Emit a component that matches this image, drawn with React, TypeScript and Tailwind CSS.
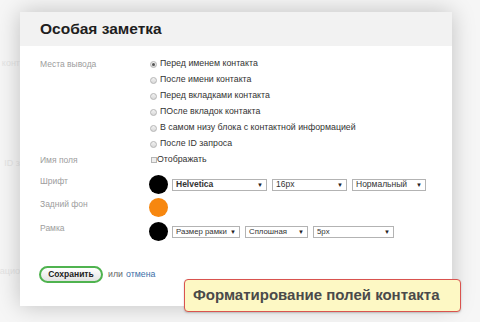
import React from "react";

const POSITIONS = [
  "Перед именем контакта",
  "После имени контакта",
  "Перед вкладками контакта",
  "ПОсле вкладок контакта",
  "В самом низу блока с контактной информацией",
  "После ID запроса",
];

function Radio({ checked }: { checked?: boolean }) {
  return (
    <span className="w-[7px] h-[7px] rounded-full border border-[#b5b5b5] bg-gradient-to-b from-[#f2f2f2] to-[#d9d9d9] flex items-center justify-center mr-[3px]">
      {checked && <span className="w-[3px] h-[3px] rounded-full bg-[#555]" />}
    </span>
  );
}

function Select({
  value,
  width,
  bold,
  small,
}: {
  value: string;
  width: string;
  bold?: boolean;
  small?: boolean;
}) {
  return (
    <div
      className={`${width} h-[12px] border border-[#b3b3b3] bg-white flex items-center justify-between pl-[3px] pr-[3px] text-[#333] leading-none whitespace-nowrap ${
        small ? "text-[7.8px]" : "text-[8.5px]"
      } ${bold ? "font-bold" : ""}`}
    >
      <span>{value}</span>
      <span className="text-[6px] text-[#222]">▼</span>
    </div>
  );
}

function Label({ children }: { children: React.ReactNode }) {
  return (
    <div className="w-[109px] shrink-0 text-[8.5px] text-[#9d9d9d] leading-[12px]">
      {children}
    </div>
  );
}

export default function App() {
  return (
    <div
      className="relative w-[480px] h-[322px] overflow-hidden bg-[#f6f6f6] flex"
      style={{ fontFamily: '"Liberation Sans", Arial, sans-serif' }}
    >
      <div className="w-[20px] shrink-0 overflow-hidden text-[9px] text-[#e4e4e4] whitespace-nowrap flex flex-col items-end">
        <div className="mt-[57px]">конт</div>
        <div className="mt-[86px]">ID з</div>
        <div className="mt-[95px]">ацио</div>
      </div>

      <div className="mt-[12px] w-[432px] h-[294px] bg-white shadow-[0_0_22px_rgba(0,0,0,0.22)] flex flex-col">
        <div className="h-[34px] bg-[#f2f2f2] flex items-center pl-[20px]">
          <h1 className="text-[15.5px] font-bold text-[#1e1e1e] leading-none">
            Особая заметка
          </h1>
        </div>

        <div className="pl-[20px] pt-[10px] flex flex-col">
          <div className="flex">
            <Label>
              <div className="mt-[2px]">Места вывода</div>
            </Label>
            <div className="flex flex-col">
              {POSITIONS.map((p, i) => (
                <div
                  key={p}
                  className="h-[16px] flex items-center text-[8.8px] text-[#333] pl-[1px] whitespace-nowrap"
                >
                  <Radio checked={i === 0} />
                  {p}
                </div>
              ))}
            </div>
          </div>

          <div className="flex h-[16px] items-center">
            <Label>Имя поля</Label>
            <div className="flex items-center text-[8.8px] text-[#333] pl-[2px]">
              <span className="w-[6px] h-[6px] border border-[#b5b5b5] bg-[#eee]" />
              Отображать
            </div>
          </div>

          <div className="flex mt-[7px]">
            <Label>Шрифт</Label>
            <div className="flex items-center gap-[5px]">
              <span className="w-[19px] h-[19px] rounded-full bg-black mr-[-1px]" />
              <Select value="Helvetica" width="w-[95px]" bold />
              <Select value="16px" width="w-[75px]" />
              <Select value="Нормальный" width="w-[74px]" />
            </div>
          </div>

          <div className="flex mt-[4px]">
            <Label>Задний фон</Label>
            <span className="w-[19px] h-[19px] rounded-full bg-[#f7870f]" />
          </div>

          <div className="flex mt-[5px]">
            <Label>Рамка</Label>
            <div className="flex items-center gap-[5px]">
              <span className="w-[19px] h-[19px] rounded-full bg-black mr-[-1px]" />
              <Select value="Размер рамки" width="w-[68px]" small />
              <Select value="Сплошная" width="w-[63px]" small />
              <Select value="5px" width="w-[81px]" small />
            </div>
          </div>

          <div className="flex items-center mt-[25px] ml-[-1px] text-[8.8px]">
            <button className="w-[64px] h-[17px] rounded-full border-2 border-[#4fb34f] bg-gradient-to-b from-white to-[#e3e3e3] text-[8.5px] font-bold text-[#222] leading-none">
              Сохранить
            </button>
            <span className="ml-[5px] text-[#666]">или</span>
            <span className="ml-[3px] text-[#3d6fa8]">отмена</span>
          </div>
        </div>
      </div>

      <div className="absolute left-[184px] top-[279px] w-[277px] h-[33px] rounded-[4px] border-[1.5px] border-[#d9534f] bg-[#fdf8c4] flex items-center pl-[8px] text-[15px] font-bold text-[#4a4a4a] shadow-[0_1px_2px_rgba(0,0,0,0.2)] whitespace-nowrap">
        Форматирование полей контакта
      </div>
    </div>
  );
}
